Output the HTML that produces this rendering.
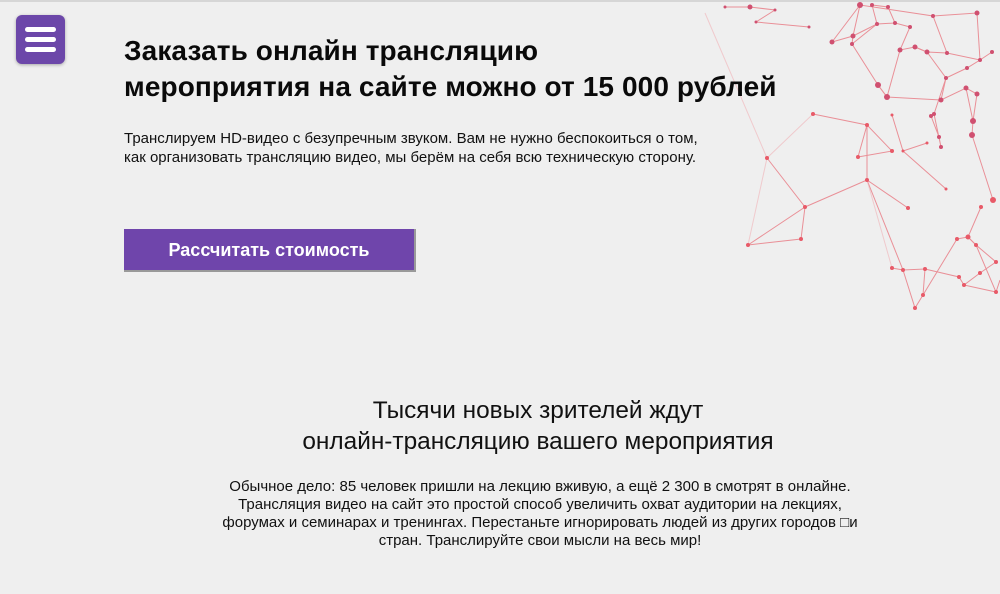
<!DOCTYPE html>
<html><head><meta charset="utf-8"><style>
*{margin:0;padding:0;box-sizing:border-box}
html,body{width:1000px;height:594px;overflow:hidden;background:#efefef;font-family:"Liberation Sans",sans-serif;color:#111}
.top{position:absolute;left:0;top:0;width:1000px;height:2px;background:#d6d6d6}
.menu{position:absolute;left:16px;top:15px;width:49px;height:49px;background:#6c47a9;border-radius:6px;box-shadow:0 1px 3px rgba(0,0,0,.3)}
.menu i{position:absolute;left:9px;width:31px;height:5px;border-radius:3px;background:#fff}
h1{position:absolute;left:124px;top:33px;font-size:28px;line-height:36px;font-weight:bold;white-space:nowrap;color:#0a0a0a;letter-spacing:0.1px}
.p1{position:absolute;left:124px;top:129px;font-size:15px;line-height:19px;white-space:nowrap}
.btn{position:absolute;left:124px;top:229px;width:292px;height:43px;background:#6f45ab;border:1px solid #999;border-width:0 2px 2px 0;color:#fff;font-weight:bold;font-size:18px;text-align:center;line-height:42px}
h2{position:absolute;left:188px;width:700px;top:395px;font-size:24.4px;line-height:31px;font-weight:normal;text-align:center;white-space:nowrap}
.p2{position:absolute;left:190px;width:700px;top:478px;font-size:15px;line-height:18px;text-align:center;white-space:nowrap}
svg{position:absolute;left:0;top:0}
</style></head><body>
<svg width="1000" height="594">
<g stroke="#e8707a" stroke-width="1" fill="none" opacity="0.75">
<polyline points="813,114 867,125 892,151 858,157 867,125"/>
<polyline points="867,125 867,180 908,208"/>
<polyline points="767,158 805,207 748,245 801,239 805,207 867,180"/>
<polyline points="892,115 903,151 927,143"/>
<polyline points="903,151 946,189"/>
<polyline points="867,180 903,270"/>
<polyline points="892,268 903,270 925,269 923,295 915,308 903,270"/>
<polyline points="925,269 959,277 964,285 980,273 996,262 976,245 968,237 957,239 923,295"/>
<polyline points="981,207 968,237 976,245 996,292 964,285"/>
<polyline points="993,200 972,135 973,121 966,88"/>
<polyline points="941,147 939,137 931,116 934,114 941,147"/>
<polyline points="878,85 887,97 941,100 966,88 977,94 973,121"/>
<polyline points="878,85 852,44 853,36 860,5"/>
<polyline points="832,42 853,36 877,24 872,5 888,7 895,23 910,27 900,50 915,47 927,52 947,53 980,60 992,52"/>
<polyline points="895,23 877,24 852,44"/>
<polyline points="933,16 977,13 980,60 967,68 946,78 941,100"/>
<polyline points="915,47 927,52 946,78 934,114"/>
<polyline points="900,50 887,97 878,85"/>
<polyline points="750,7 775,10 756,22 809,27"/>
<polyline points="725,7 750,7"/>
<polyline points="832,42 860,5 933,16 947,53"/>
<polyline points="996,292 1000,280"/>
</g>
<g stroke="#f0b0b5" stroke-width="1" fill="none" opacity="0.6">
<polyline points="705,13 767,158 748,245"/>
<polyline points="813,114 767,158"/>
<polyline points="867,180 892,268"/>
</g>
<g fill="#e85a68">
<circle cx="813" cy="114" r="2"/><circle cx="867" cy="125" r="2"/><circle cx="892" cy="151" r="2"/><circle cx="858" cy="157" r="2"/><circle cx="867" cy="180" r="2"/><circle cx="805" cy="207" r="2"/><circle cx="767" cy="158" r="2"/><circle cx="748" cy="245" r="2"/><circle cx="801" cy="239" r="2"/><circle cx="908" cy="208" r="2"/><circle cx="903" cy="151" r="1.5"/><circle cx="927" cy="143" r="1.5"/><circle cx="946" cy="189" r="1.5"/><circle cx="892" cy="115" r="1.5"/><circle cx="993" cy="200" r="3"/><circle cx="981" cy="207" r="2"/><circle cx="957" cy="239" r="2"/><circle cx="968" cy="237" r="2.5"/><circle cx="976" cy="245" r="2"/><circle cx="996" cy="262" r="2"/><circle cx="892" cy="268" r="2"/><circle cx="903" cy="270" r="2"/><circle cx="925" cy="269" r="2"/><circle cx="915" cy="308" r="2"/><circle cx="923" cy="295" r="2"/><circle cx="959" cy="277" r="2"/><circle cx="964" cy="285" r="2"/><circle cx="980" cy="273" r="2"/><circle cx="996" cy="292" r="2"/>
</g>
<g fill="#d05070">
<circle cx="972" cy="135" r="3"/><circle cx="973" cy="121" r="3"/><circle cx="941" cy="147" r="2"/><circle cx="939" cy="137" r="2"/><circle cx="931" cy="116" r="2"/><circle cx="934" cy="114" r="2"/><circle cx="878" cy="85" r="3"/><circle cx="887" cy="97" r="3"/><circle cx="941" cy="100" r="2.5"/><circle cx="966" cy="88" r="2.5"/><circle cx="977" cy="94" r="2.5"/><circle cx="860" cy="5" r="3"/><circle cx="872" cy="5" r="2"/><circle cx="888" cy="7" r="2"/><circle cx="832" cy="42" r="2.5"/><circle cx="852" cy="44" r="2"/><circle cx="853" cy="36" r="2.5"/><circle cx="900" cy="50" r="2.5"/><circle cx="915" cy="47" r="2.5"/><circle cx="927" cy="52" r="2.5"/><circle cx="895" cy="23" r="2"/><circle cx="877" cy="24" r="2"/><circle cx="910" cy="27" r="2"/><circle cx="933" cy="16" r="2"/><circle cx="947" cy="53" r="2"/><circle cx="980" cy="60" r="2"/><circle cx="992" cy="52" r="2"/><circle cx="977" cy="13" r="2.5"/><circle cx="967" cy="68" r="2"/><circle cx="946" cy="78" r="2"/><circle cx="750" cy="7" r="2.5"/><circle cx="775" cy="10" r="1.5"/><circle cx="756" cy="22" r="1.5"/><circle cx="809" cy="27" r="1.5"/><circle cx="725" cy="7" r="1.5"/>
</g>
</svg>
<div class="top"></div>
<div class="menu"><i style="top:12px"></i><i style="top:22px"></i><i style="top:32px"></i></div>
<h1>Заказать онлайн трансляцию<br>мероприятия на сайте можно от 15 000 рублей</h1>
<div class="p1">Транслируем HD-видео с безупречным звуком. Вам не нужно беспокоиться о том,<br>как организовать трансляцию видео, мы берём на себя всю техническую сторону.</div>
<div class="btn">Рассчитать стоимость</div>
<h2>Тысячи новых зрителей ждут<br>онлайн-трансляцию вашего мероприятия</h2>
<div class="p2">Обычное дело: 85 человек пришли на лекцию вживую, а ещё 2 300 в смотрят в онлайне.<br>Трансляция видео на сайт это простой способ увеличить охват аудитории на лекциях,<br>форумах и семинарах и тренингах. Перестаньте игнорировать людей из других городов &#9633;и<br>стран. Транслируйте свои мысли на весь мир!</div>
</body></html>
